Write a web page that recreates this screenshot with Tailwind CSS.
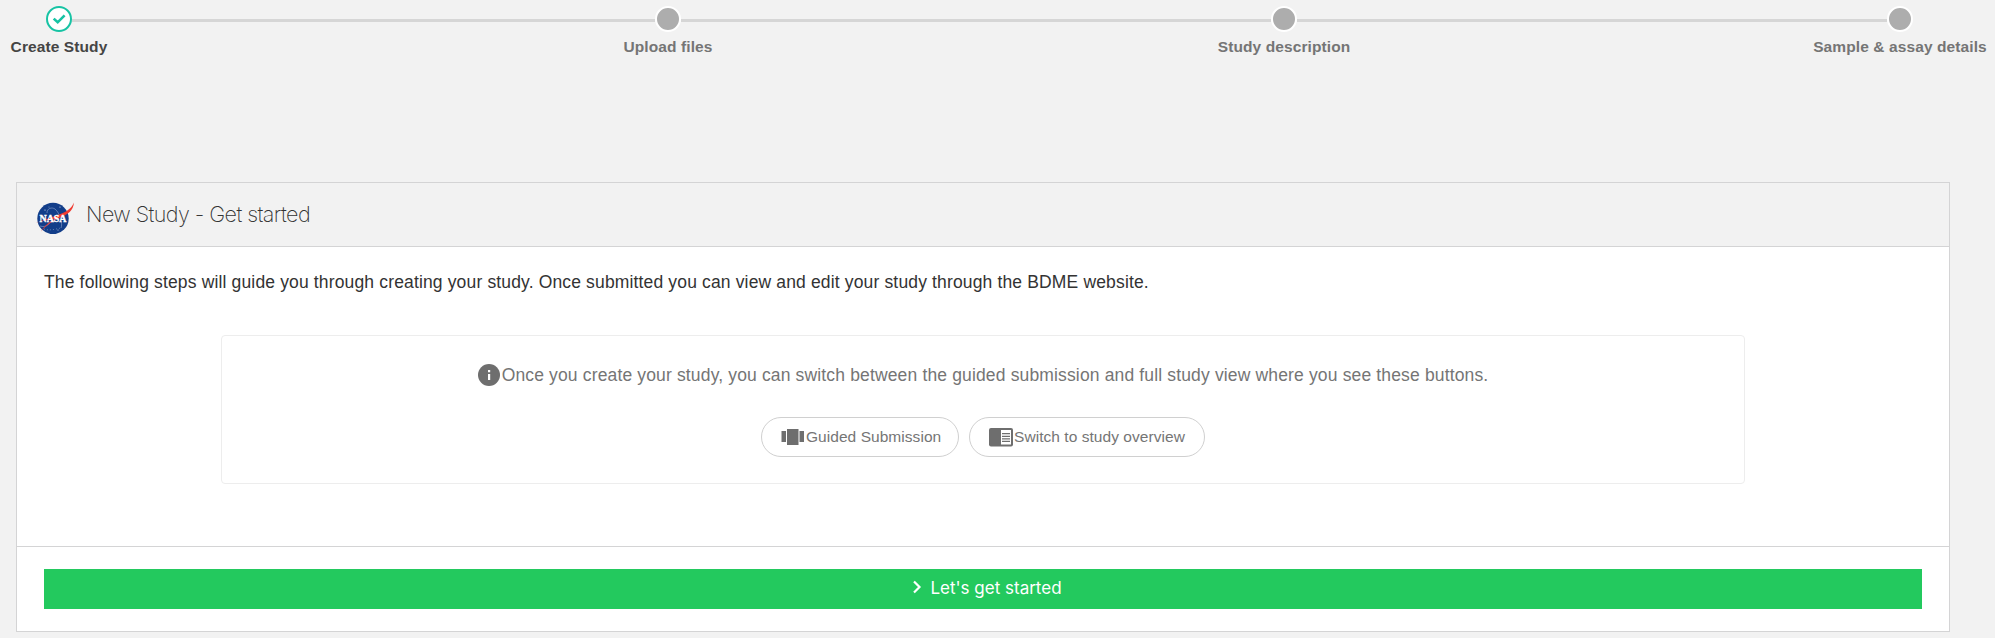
<!DOCTYPE html>
<html lang="en">
<head>
<meta charset="utf-8">
<title>New Study - Get started</title>
<script src="https://cdn.jsdelivr.net/npm/@tailwindcss/browser@4"></script>
</head>
<body class="h-[638px] w-[1995px] overflow-hidden bg-[#f2f2f2] font-['Liberation_Sans',Arial,sans-serif] text-[#757575]">
<nav class="flex h-[182px] items-start pt-[6px] pl-[59px] text-[15.5px] font-bold leading-[20px] tracking-[0.1px]">
  <div class="flex w-0 flex-col items-center gap-[5px] text-[#454545]">
    <svg class="h-[26px] w-[26px] shrink-0" viewBox="0 0 26 26" fill="none"><circle cx="13" cy="13" r="12" fill="#fff" stroke="#17c3a4" stroke-width="2"/><path d="M7.700 12.600l4 3.700 6.900-7" stroke="#17c3a4" stroke-width="2.600"/></svg>
    <span class="whitespace-nowrap">Create Study</span>
  </div>
  <div class="mt-[13px] ml-[13px] h-[3px] w-[583px] bg-[#d6d6d6]"></div>
  <div class="ml-[13px] flex w-0 flex-col items-center gap-[5px]">
    <span class="h-[26px] w-[26px] shrink-0 rounded-full border-2 border-white bg-[#adadad]"></span>
    <span class="whitespace-nowrap">Upload files</span>
  </div>
  <div class="mt-[13px] ml-[13px] h-[3px] w-[590px] bg-[#d6d6d6]"></div>
  <div class="ml-[13px] flex w-0 flex-col items-center gap-[5px]">
    <span class="h-[26px] w-[26px] shrink-0 rounded-full border-2 border-white bg-[#adadad]"></span>
    <span class="whitespace-nowrap">Study description</span>
  </div>
  <div class="mt-[13px] ml-[13px] h-[3px] w-[590px] bg-[#d6d6d6]"></div>
  <div class="ml-[13px] flex w-0 flex-col items-center gap-[5px]">
    <span class="h-[26px] w-[26px] shrink-0 rounded-full border-2 border-white bg-[#adadad]"></span>
    <span class="whitespace-nowrap">Sample &amp; assay details</span>
  </div>
</nav>
<main class="ml-4 flex h-[450px] w-[1934px] flex-col border border-[#d4d4d5] bg-white">
  <header class="flex h-[64px] shrink-0 items-center border-b border-[#d4d4d5] bg-[#f2f2f2] pl-[18px]">
    <svg class="mt-[6px] h-[32px] w-[42px] shrink-0" viewBox="0 0 42 32">
      <circle cx="18" cy="16.500" r="15.700" fill="#123d89"/>
      <g fill="none" stroke="#8ea5cc" stroke-width=".6"><path d="M12 11c0-5 5-6 8-4 5 4 8 15 6 19"/><path d="M5 24c6 2 10-2 12-7"/><path d="M9 27c5 2 12 0 17-1" stroke-dasharray="1 2"/></g>
      <g fill="#dce4f2"><circle cx="10" cy="8" r=".6"/><circle cx="25" cy="5" r=".6"/><circle cx="23" cy="28" r=".5"/><circle cx="14" cy="5" r=".4"/></g>
      <path d="M39 .5C34.500 11 25 12 .5 21c10-3 17-4 20-4-7 3-12 8-15 13 6-7 12-11 19-14C33.500 12 38 9 39 .5z" fill="#ef3a30"/>
      <text x="18" y="20" text-anchor="middle" textLength="27" lengthAdjust="spacingAndGlyphs" font-family="Liberation Serif" font-weight="700" font-size="10" fill="#fff" stroke="#fff" stroke-width=".35">NASA</text>
    </svg>
    <h1 class="ml-[9px] font-['Inter',sans-serif] text-[21.5px] font-extralight tracking-[-0.56px] whitespace-nowrap text-[#333]">New Study - Get started</h1>
  </header>
  <section class="flex h-[300px] shrink-0 flex-col border-b border-[#d4d4d5] px-[27px] pt-[22px]">
    <p class="h-[26px] text-[17.5px] leading-[26px] tracking-[0.15px] whitespace-nowrap text-[#333]">The following steps will guide you through creating your study. Once submitted you can view and edit your study through the BDME website.</p>
    <div class="mt-[40px] flex h-[149px] w-[1524px] flex-col items-center self-center rounded-[4px] border border-[#ededed] pt-[26px]">
      <p class="flex h-[26px] items-center text-[17.5px] leading-[26px] tracking-[0.15px]">
        <svg class="mr-[2px] h-[22px] w-[22px]" viewBox="0 0 22 22"><circle cx="11" cy="11" r="11" fill="#6e6e6e"/><path d="M10 10h2.200v6H10zM10 6h2.200v2.200H10z" fill="#fff"/></svg>
        <span class="whitespace-nowrap">Once you create your study, you can switch between the guided submission and full study view where you see these buttons.</span>
      </p>
      <div class="mt-[29px] flex gap-[10px] text-[15.5px] tracking-[0.05px]">
        <button class="flex h-[40px] w-[198px] items-center rounded-full border border-[#d0d0d0] pl-[19px]">
          <svg class="mr-[2px] h-[24px] w-[23px] shrink-0" viewBox="0 0 23 24" fill="#6e6e6e"><path d="M.5 6H5v11H.5zM6 4h11.500v16H6zM18.500 6H23v11h-4.500z"/></svg>
          <span class="whitespace-nowrap">Guided Submission</span>
        </button>
        <button class="flex h-[40px] w-[236px] items-center rounded-full border border-[#d0d0d0] pl-[19px]">
          <svg class="mr-[1px] h-[24px] w-[24px] shrink-0" viewBox="0 0 24 24"><rect y="3" width="24" height="18.500" rx="2" fill="#6e6e6e"/><path d="M12 5h10v14.500H12z" fill="#fff"/><path d="M13 8.700h8M13 11.300h8M13 13.900h8M13 16.400h8" stroke="#6e6e6e" stroke-width="1.300"/></svg>
          <span class="whitespace-nowrap">Switch to study overview</span>
        </button>
      </div>
    </div>
  </section>
  <footer class="px-[27px] pt-[22px]">
    <button class="flex h-[40px] w-full items-center justify-center bg-[#23c95e] pl-[9px] font-['Inter',sans-serif] text-[17px] text-white">
      <svg class="mr-[8px] mb-[4px] h-[14px] w-[9px]" viewBox="0 0 9 14" fill="none"><path d="M1 1.500l5.500 5.500L1 12.500" stroke="#fff" stroke-width="2.200"/></svg>
      <span>Let's get started</span>
    </button>
  </footer>
</main>
</body>
</html>
